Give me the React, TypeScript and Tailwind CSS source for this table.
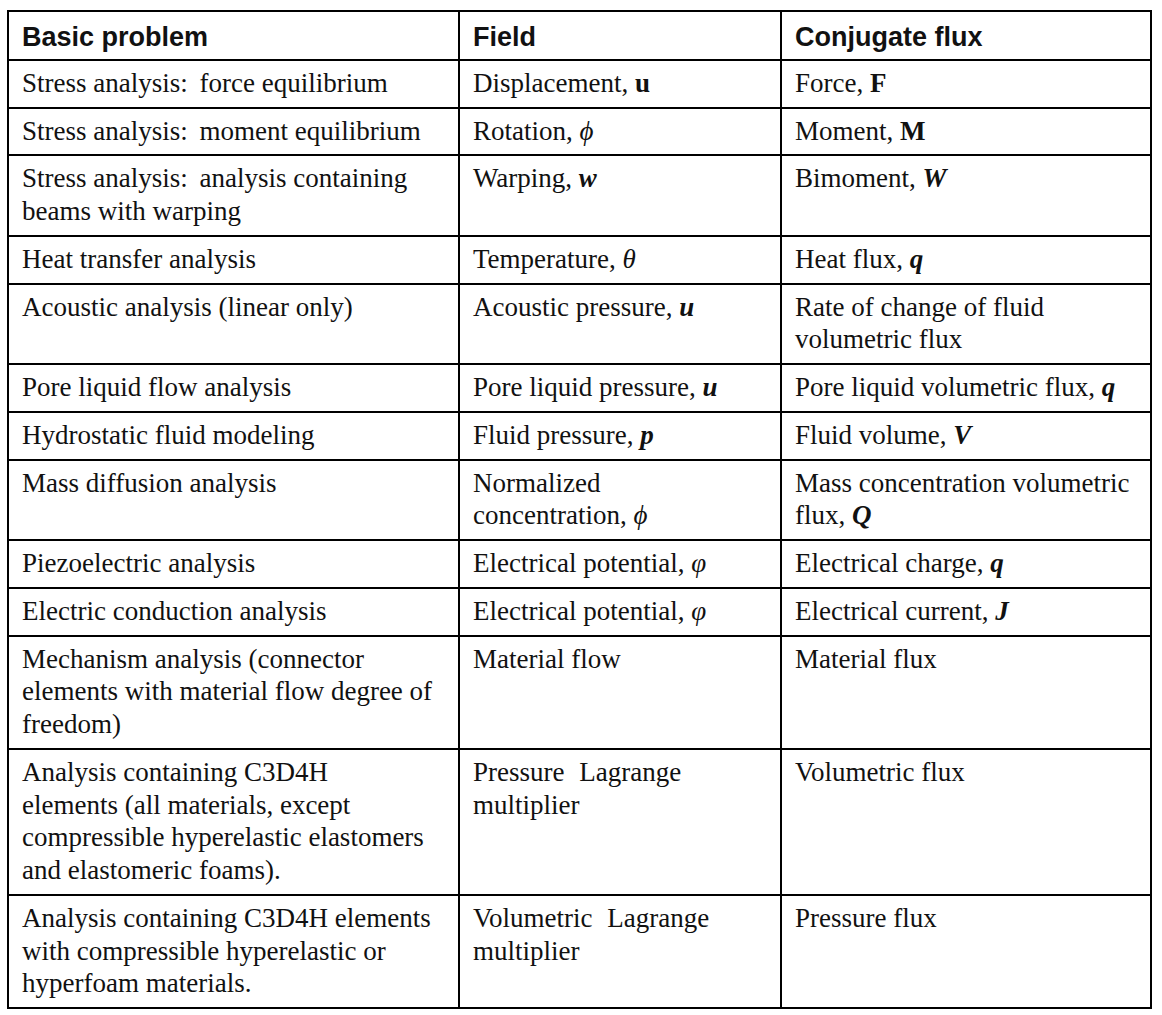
import React from "react";

type N = React.ReactNode;

const B = ({ children }: { children: N }) => <span className="font-bold">{children}</span>;
const BI = ({ children }: { children: N }) => <span className="font-bold italic">{children}</span>;
const I = ({ children }: { children: N }) => <span className="italic">{children}</span>;
const Gap = () => <span className="inline-block w-[5px]" />;
const WGap = () => <span className="inline-block w-[8px]" />;

const rows: [N, N, N][] = [
  [
    <>Stress analysis:<Gap /> force equilibrium</>,
    <>Displacement, <B>u</B></>,
    <>Force, <B>F</B></>,
  ],
  [
    <>Stress analysis:<Gap /> moment equilibrium</>,
    <>Rotation, <I>{"\u03D5"}</I></>,
    <>Moment, <B>M</B></>,
  ],
  [
    <>Stress analysis:<Gap /> analysis containing<br />beams with warping</>,
    <>Warping, <BI>w</BI></>,
    <>Bimoment, <BI>W</BI></>,
  ],
  [
    <>Heat transfer analysis</>,
    <>Temperature, <I>{"\u03B8"}</I></>,
    <>Heat flux, <BI>q</BI></>,
  ],
  [
    <>Acoustic analysis (linear only)</>,
    <>Acoustic pressure, <BI>u</BI></>,
    <>Rate of change of fluid<br />volumetric flux</>,
  ],
  [
    <>Pore liquid flow analysis</>,
    <>Pore liquid pressure, <BI>u</BI></>,
    <>Pore liquid volumetric flux, <BI>q</BI></>,
  ],
  [
    <>Hydrostatic fluid modeling</>,
    <>Fluid pressure, <BI>p</BI></>,
    <>Fluid volume, <BI>V</BI></>,
  ],
  [
    <>Mass diffusion analysis</>,
    <>Normalized<br />concentration, <I>{"\u03D5"}</I></>,
    <>Mass concentration volumetric<br />flux, <BI>Q</BI></>,
  ],
  [
    <>Piezoelectric analysis</>,
    <>Electrical potential, <I>{"\u03C6"}</I></>,
    <>Electrical charge, <BI>q</BI></>,
  ],
  [
    <>Electric conduction analysis</>,
    <>Electrical potential, <I>{"\u03C6"}</I></>,
    <>Electrical current, <BI>J</BI></>,
  ],
  [
    <>Mechanism analysis (connector<br />elements with material flow degree of<br />freedom)</>,
    <>Material flow</>,
    <>Material flux</>,
  ],
  [
    <>Analysis containing C3D4H<br />elements (all materials, except<br />compressible hyperelastic elastomers<br />and elastomeric foams).</>,
    <>Pressure<WGap /> Lagrange<br />multiplier</>,
    <>Volumetric flux</>,
  ],
  [
    <>Analysis containing C3D4H elements<br />with compressible hyperelastic or<br />hyperfoam materials.</>,
    <>Volumetric<WGap /> Lagrange<br />multiplier</>,
    <>Pressure flux</>,
  ],
];

export default function App() {
  return (
    <div className="min-h-screen bg-white pl-[7px] pt-[10px]">
      <table
        className="w-[1145px] table-fixed border-separate border-spacing-0 border-l-2 border-t-2 border-black text-[#111] text-[27px] leading-[32.75px]"
        style={{ fontFamily: '"Liberation Serif", "Times New Roman", serif' }}
      >
        <colgroup>
          <col className="w-[451px]" />
          <col className="w-[322px]" />
          <col className="w-[370px]" />
        </colgroup>
        <thead>
          <tr>
            {["Basic problem", "Field", "Conjugate flux"].map((h) => (
              <th
                key={h}
                className="border-b-2 border-r-2 border-black pl-[13px] pr-[10px] pt-[9px] pb-[5px] text-left align-top font-bold whitespace-nowrap font-['Liberation_Sans',Arial,sans-serif]"
              >
                {h}
              </th>
            ))}
          </tr>
        </thead>
        <tbody>
          {rows.map((r, i) => (
            <tr key={i}>
              {r.map((c, j) => (
                <td
                  key={j}
                  className="border-b-2 border-r-2 border-black pl-[13px] pr-[8px] pt-[6px] pb-[7px] text-left align-top whitespace-nowrap"
                >
                  {c}
                </td>
              ))}
            </tr>
          ))}
        </tbody>
      </table>
    </div>
  );
}
